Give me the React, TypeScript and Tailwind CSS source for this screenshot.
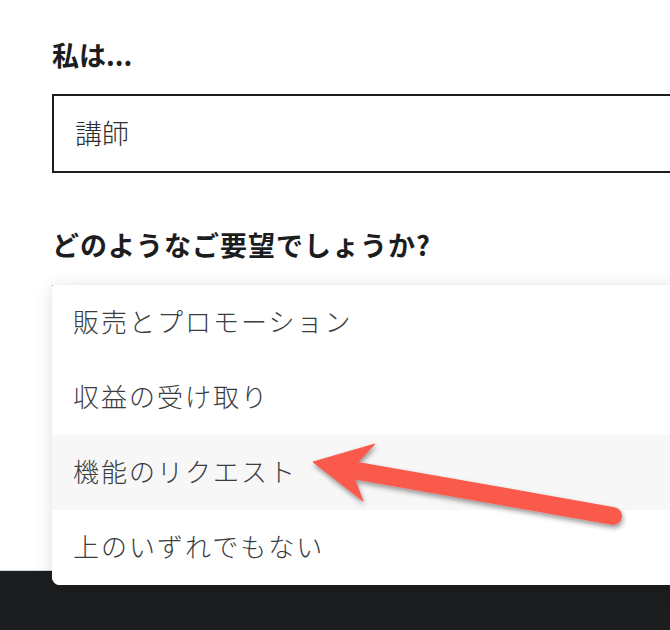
import React from "react"

const options = ["販売とプロモーション", "収益の受け取り", "機能のリクエスト", "上のいずれでもない"]

const Arrow = () => (
  <svg className="pointer-events-none absolute inset-0 z-20" width="670" height="630" viewBox="0 0 670 630">
    <defs>
      <filter id="arrowShadow" x="-20%" y="-50%" width="140%" height="200%">
        <feDropShadow dx="1" dy="3" stdDeviation="2.5" floodColor="#000" floodOpacity="0.4" />
      </filter>
    </defs>
    <g filter="url(#arrowShadow)" fill="#fa5a4b" stroke="#fa5a4b">
      <line x1="358" y1="471" x2="613" y2="516" strokeWidth="18" strokeLinecap="round" />
      <polygon points="313,462 375,444 358,462 355,480 363,501" strokeWidth="1" strokeLinejoin="miter" />
    </g>
  </svg>
)

export default function App() {
  return (
    <div
      className="relative flex h-[630px] w-[670px] flex-col overflow-hidden bg-white"
      style={{ fontFamily: '"Noto Sans CJK JP", "Noto Sans", sans-serif' }}
    >
      <main className="flex-1 pl-[52px] pt-[38px]">
        <div className="text-[27px] font-bold leading-[34px] text-[#1c1d1f]">私は...</div>

        <div className="mt-[22px] flex h-[79px] w-[660px] items-center border-2 border-[#1c1d1f] pl-[21px] text-[27px] font-light text-[#2d2f31]">
          講師
        </div>

        <div className="mt-[55px] text-[27px] font-bold leading-[34px] tracking-[1px] text-[#1c1d1f]">
          どのようなご要望でしょうか?
        </div>

        {/* select with open menu */}
        <div className="relative mt-[23px] h-[79px] w-[660px] border-2 border-[#1c1d1f]">
          <ul className="absolute -left-[2px] -top-[2px] z-10 w-[660px] overflow-hidden rounded-b-lg rounded-tl-[2px] bg-white shadow-[0_2px_18px_rgba(0,0,0,0.13)]">
            {options.map((o, i) => (
              <li
                key={o}
                className={
                  "flex h-[75px] items-center pb-[4px] pl-[21px] text-[26px] font-light tracking-[2px] text-[#3a3c3e] " +
                  (i === 2 ? "bg-[#f7f7f7]" : "bg-white")
                }
              >
                {o}
              </li>
            ))}
          </ul>
        </div>
      </main>

      <footer className="h-[60px] border-t border-[#d1d7dc] bg-[#1c1d1f]" />

      <Arrow />
    </div>
  )
}
